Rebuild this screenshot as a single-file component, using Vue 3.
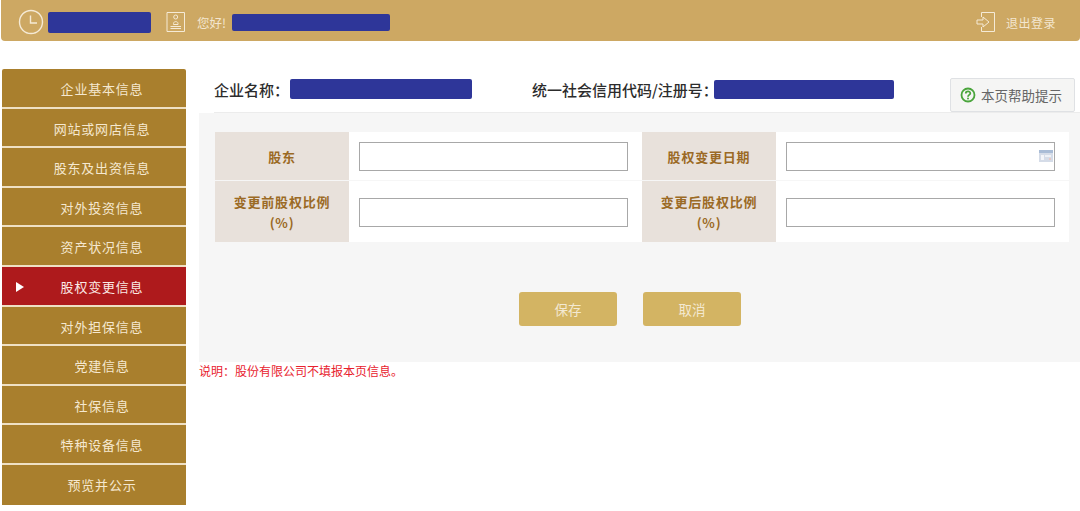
<template>
  <div class="page">
    <header class="topbar">
      <div class="top-left">
        <svg class="ic-clock" viewBox="0 0 26 26" width="26" height="26">
          <circle cx="13" cy="13" r="11.500" />
          <path d="M12.500 6.500V14H19" />
        </svg>
        <span class="mask mask-date"></span>
        <svg class="ic-user" viewBox="0 0 20 22" width="20" height="22">
          <path d="M1 1.500H18.500V20.500H1Z" />
          <circle cx="9.700" cy="6" r="2" />
          <path d="M7.500 12.500C7.500 10 12 10 12 12.500V13.500H7.500Z" />
          <path d="M4.500 15.500H15M4.500 17.500H15" />
        </svg>
        <span class="hello">您好!</span>
        <span class="mask mask-name"></span>
      </div>
      <div class="logout">
        <svg class="ic-exit" viewBox="0 0 20 22" width="20" height="22">
          <path d="M5.500 6V1.500H18.500V20.500H5.500V16" />
          <path d="M1 9H7V6L13 11L7 16V13H1Z" />
        </svg>
        <span>退出登录</span>
      </div>
    </header>

    <div class="body">
      <nav class="side">
        <a
          v-for="item in menu"
          :key="item"
          class="side-item"
          :class="{ active: item === current }"
        >{{ item }}</a>
      </nav>

      <main class="main">
        <div class="company">
          <span class="label">企业名称：</span>
          <span class="mask mask-company"></span>
          <span class="label label-code">统一社会信用代码/注册号：</span>
          <span class="mask mask-code"></span>
          <button class="help">
            <svg viewBox="0 0 16 16" width="16" height="16">
              <circle cx="8" cy="8" r="6.500" />
              <path d="M5.800 6.400C5.800 3.800 10.300 3.800 10.300 6.300C10.300 7.900 8 7.900 8 9.700" />
              <circle class="dot" cx="8" cy="11.600" r="1" />
            </svg>
            本页帮助提示
          </button>
        </div>

        <section class="panel">
          <div class="form">
            <template v-for="field in fields" :key="field.name">
              <div class="cell-label">
                <span>{{ field.name }}</span>
                <span v-if="field.unit">(%)</span>
              </div>
              <div class="cell-input">
                <div class="input">
                  <svg v-if="field.date" class="ic-cal" viewBox="0 0 14 12" width="14" height="12">
                    <rect x="0" y="0" width="14" height="12" fill="#d5dce8" />
                    <rect x="0" y="0" width="14" height="3" fill="#a9bcd6" />
                    <rect x="2" y="5" width="3" height="5" fill="#f3f5f9" />
                    <rect x="6" y="5" width="6" height="2" fill="#eef1f6" />
                    <rect x="10" y="8" width="2" height="2" fill="#e8c9c4" />
                  </svg>
                </div>
              </div>
            </template>
          </div>
          <div class="actions">
            <button class="btn">保存</button>
            <button class="btn">取消</button>
          </div>
        </section>
        <p class="note">说明：股份有限公司不填报本页信息。</p>
      </main>
    </div>
  </div>
</template>

<script setup>
const current = '股权变更信息'

const menu = [
  '企业基本信息',
  '网站或网店信息',
  '股东及出资信息',
  '对外投资信息',
  '资产状况信息',
  '股权变更信息',
  '对外担保信息',
  '党建信息',
  '社保信息',
  '特种设备信息',
  '预览并公示'
]

const fields = [
  { name: '股东' },
  { name: '股权变更日期', date: true },
  { name: '变更前股权比例', unit: true },
  { name: '变更后股权比例', unit: true }
]
</script>

<style>
html, body {
  background: #fff;
  overflow: hidden;
}
</style>

<style scoped>
.page {
  width: 1080px;
  height: 511px;
  overflow: hidden;
  font-family: "Noto Sans CJK SC", "Liberation Sans", sans-serif;
}

.topbar {
  display: flex;
  align-items: center;
  justify-content: space-between;
  box-sizing: border-box;
  height: 41px;
  margin-left: 1px;
  padding: 3px 24px 0 17px;
  background: #cda863;
  border-radius: 0 0 4px 4px;
  color: #f3e6cf;
  font-size: 12px;
}

.top-left {
  display: flex;
  align-items: center;
}

.mask {
  display: block;
  background: #2e3699;
  border-radius: 2px;
}

.mask-date {
  width: 103px;
  height: 21px;
  margin-left: 4px;
}

.mask-name {
  width: 158px;
  height: 17px;
  margin-left: 6px;
}

.ic-clock {
  fill: none;
  stroke: #f5ead6;
  stroke-width: 1.400;
}

.ic-user {
  margin-left: 15px;
  fill: none;
  stroke: #f5ead6;
}

.hello {
  margin-left: 11px;
  font-size: 12.500px;
  white-space: nowrap;
}

.logout {
  display: flex;
  align-items: center;
  gap: 10px;
  letter-spacing: 0.500px;
}

.ic-exit {
  fill: none;
  stroke: #f5ead6;
}

.body {
  display: flex;
  padding: 28px 0 0 2px;
}

.side {
  display: flex;
  flex-direction: column;
  flex: none;
  width: 184px;
}

.side-item {
  display: block;
  box-sizing: border-box;
  height: 39.600px;
  padding-left: 16px;
  background: #a97f2d;
  border-bottom: 2px solid #efe0c4;
  color: #f5e8d0;
  font-size: 13px;
  line-height: 40px;
  text-align: center;
  letter-spacing: 0.800px;
}

.side-item:first-child {
  border-radius: 2px 2px 0 0;
}

.side-item:last-child {
  border-bottom: 0;
}

.side-item.active {
  position: relative;
  background: #ae1a1c;
  color: #fbe9e4;
}

.side-item.active::before {
  content: "";
  position: absolute;
  left: 14px;
  top: 15px;
  border-left: 8px solid #fff;
  border-top: 5px solid transparent;
  border-bottom: 5px solid transparent;
}

.main {
  flex: none;
  width: 881px;
  margin-left: 13px;
}

.company {
  position: relative;
  display: flex;
  align-items: center;
  box-sizing: border-box;
  height: 44px;
  margin-left: 15px;
  padding: 0 0 3px 0;
  border-bottom: 1px solid #ececec;
  color: #2c2c2c;
  font-size: 15px;
  font-weight: 500;
}

.label {
  white-space: nowrap;
}

.label-code {
  margin-left: 60px;
  margin-right: -4px;
}

.mask-company {
  width: 182px;
  height: 20px;
  margin-left: 1px;
}

.mask-code {
  width: 180px;
  height: 19px;
}

.help {
  position: absolute;
  right: 5px;
  top: 9px;
  display: flex;
  align-items: center;
  gap: 5px;
  box-sizing: border-box;
  width: 125px;
  height: 34px;
  padding: 0 0 0 9px;
  background: #f5f5f4;
  border: 1px solid #dfe1e4;
  border-radius: 2px;
  color: #666;
  font-family: inherit;
  font-size: 13.500px;
  font-weight: 400;
}

.help svg {
  fill: none;
  stroke: #4aa53c;
  stroke-width: 1.800;
}

.help .dot {
  fill: #4aa53c;
  stroke: none;
}

.panel {
  box-sizing: border-box;
  height: 249px;
  padding: 19px 11px 0 16px;
  background: #f6f6f6;
}

.form {
  display: grid;
  grid-template-columns: 134px 293px 134px 293px;
  grid-template-rows: 48px 61px;
  row-gap: 1px;
}

.cell-label {
  display: flex;
  flex-direction: column;
  align-items: center;
  justify-content: center;
  background: #e8e1db;
  color: #9b6a25;
  font-size: 13px;
  font-weight: 700;
  letter-spacing: 0.800px;
  line-height: 21px;
}

.cell-input {
  display: flex;
  align-items: center;
  padding: 1px 14px 0 10px;
  background: #fff;
}

.input {
  position: relative;
  width: 100%;
  height: 29px;
  box-sizing: border-box;
  background: #fff;
  border: 1px solid #a8a8a8;
}

.ic-cal {
  position: absolute;
  right: 1px;
  top: 7px;
}

.actions {
  display: flex;
  justify-content: center;
  gap: 26px;
  padding: 50px 24px 0 0;
}

.btn {
  width: 98px;
  height: 34px;
  padding: 0;
  background: #d3b463;
  border: 0;
  border-radius: 3px;
  color: #f3e9d2;
  font-family: inherit;
  font-size: 13.500px;
}

.note {
  margin: 1px 0 0 0;
  color: #e8222e;
  font-size: 12px;
  line-height: 16px;
}
</style>
